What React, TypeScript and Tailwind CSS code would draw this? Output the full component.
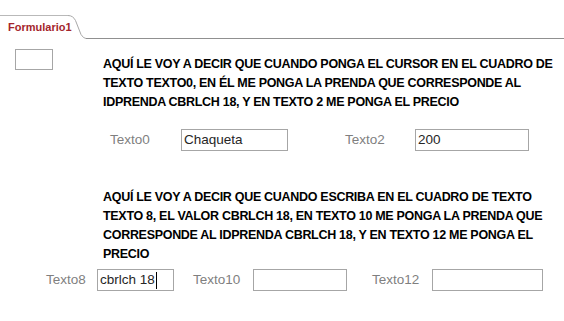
import React from 'react';

const FONT = { fontFamily: '"Liberation Sans", Arial, sans-serif' };

function Field({ value, cursor, className }: { value?: string; cursor?: boolean; className: string }) {
  return (
    <div className={`h-[22px] border border-[#a6a6a6] bg-white flex items-center pl-[2px] text-[13.5px] text-[#262626] ${className}`}>
      <span>{value}</span>
      {cursor && <span className="w-px h-[17px] bg-black ml-px" />}
    </div>
  );
}

export default function App() {
  return (
    <div className="w-[564px] h-[321px] bg-white overflow-hidden" style={FONT}>
      {/* tab strip */}
      <div className="flex h-[39px] pt-[15px]">
        <div className="w-[68px] border-t border-[#b9b9b9] flex items-center pl-[8px] pb-px text-[11px] font-bold text-[#a4262c]">
          Formulario1
        </div>
        <svg width="18" height="24" className="shrink-0" viewBox="0 0 18 24">
          <path d="M0 0.5 Q5 0.5 7.5 5.5 L13 19.5 Q15.5 23.5 18 23.5" fill="none" stroke="#a8a8a8" strokeWidth="1" />
        </svg>
        <div className="flex-1 border-b border-[#909090]" />
      </div>

      {/* first block */}
      <div className="flex items-start">
        <div className="ml-[15px] mt-[10px] w-[38px] h-[21px] border border-[#a6a6a6] shrink-0" />
        <p className="ml-[50px] mt-[16px] text-[12.5px] leading-[19px] font-bold tracking-[-0.3px] text-black whitespace-nowrap">
          AQUÍ LE VOY A DECIR QUE CUANDO PONGA EL CURSOR EN EL CUADRO DE
          <br />
          TEXTO TEXTO0, EN ÉL ME PONGA LA PRENDA QUE CORRESPONDE AL
          <br />
          IDPRENDA CBRLCH 18, Y EN TEXTO 2 ME PONGA EL PRECIO
        </p>
      </div>

      <div className="flex items-center mt-[17px] pl-[110px] text-[13.5px] text-[#7f7f7f]">
        <span className="w-[71px]">Texto0</span>
        <Field value="Chaqueta" className="w-[107px]" />
        <span className="ml-[57px] w-[70px]">Texto2</span>
        <Field value="200" className="w-[114px]" />
      </div>

      {/* second block */}
      <p className="ml-[103px] mt-[37px] text-[12.5px] leading-[19px] font-bold tracking-[-0.3px] text-black whitespace-nowrap">
        AQUÍ LE VOY A DECIR QUE CUANDO ESCRIBA EN EL CUADRO DE TEXTO
        <br />
        TEXTO 8, EL VALOR CBRLCH 18, EN TEXTO 10 ME PONGA LA PRENDA QUE
        <br />
        CORRESPONDE AL IDPRENDA CBRLCH 18, Y EN TEXTO 12 ME PONGA EL
        <br />
        PRECIO
      </p>

      <div className="flex items-center mt-[5px] pl-[46px] text-[13.5px] text-[#7f7f7f]">
        <span className="w-[51px]">Texto8</span>
        <Field value="cbrlch 18" cursor className="w-[77px]" />
        <span className="ml-[19px] w-[60px]">Texto10</span>
        <Field className="w-[94px]" />
        <span className="ml-[25px] w-[60px]">Texto12</span>
        <Field className="w-[111px]" />
      </div>
    </div>
  );
}
